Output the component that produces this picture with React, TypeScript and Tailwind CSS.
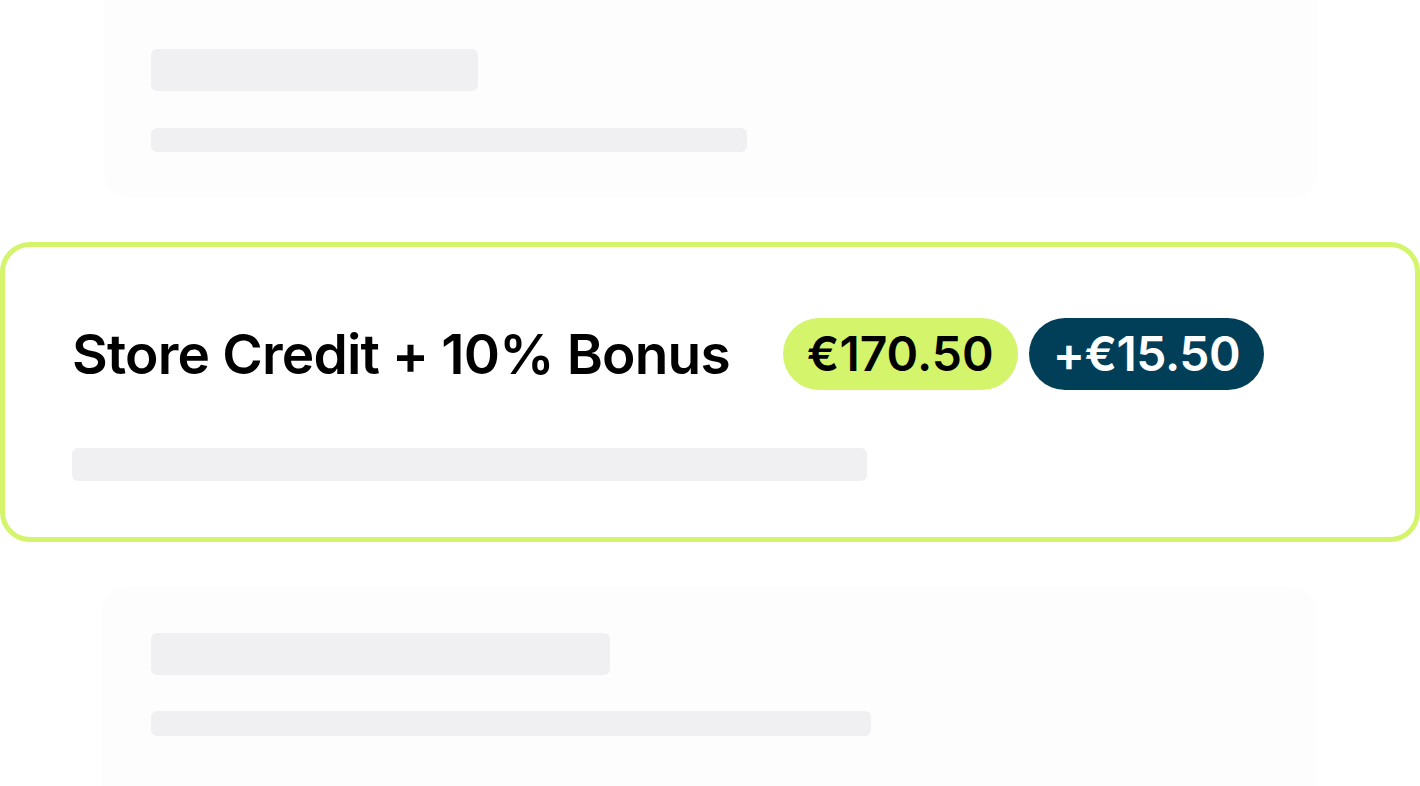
export default function App() {
  return (
    <div
      className="w-[1420px] h-[786px] overflow-hidden bg-white flex flex-col"
      style={{ fontFamily: "Inter, 'Noto Sans', sans-serif" }}
    >
      {/* faded card above */}
      <div className="ml-[104px] w-[1214px] h-[197px] shrink-0 rounded-b-3xl bg-[#fdfdfd] pl-[47px] pt-[49px] flex flex-col">
        <div className="w-[327px] h-[42px] rounded-md bg-[#f0eff1]" />
        <div className="mt-[37px] w-[596px] h-[24px] rounded-md bg-[#f0eff1]" />
      </div>

      {/* highlighted card */}
      <div className="mt-[45px] w-[1420px] h-[300px] shrink-0 rounded-[30px] border-[5px] border-[#d3f46b] bg-white pl-[67px] pt-[71px] flex flex-col">
        <div className="flex items-center h-[72px]">
          <span className="text-[55px] font-semibold text-black tracking-[-0.015em] leading-none">
            Store Credit + 10% Bonus
          </span>
          <span className="ml-[53px] h-[72px] px-[24px] rounded-full bg-[#d3f46b] flex items-center text-[48px] font-semibold text-black leading-none">
            €170.50
          </span>
          <span className="ml-[11px] h-[72px] px-[24px] rounded-full bg-[#013f58] flex items-center text-[48px] font-semibold text-white tracking-[-0.01em] leading-none">
            +€15.50
          </span>
        </div>
        <div className="mt-[58px] w-[795px] h-[33px] rounded-md bg-[#f0eff1]" />
      </div>

      {/* faded card below */}
      <div className="mt-[45px] ml-[102px] w-[1214px] h-[220px] shrink-0 rounded-3xl bg-[#fdfdfd] pl-[49px] pt-[46px] flex flex-col">
        <div className="w-[459px] h-[42px] rounded-md bg-[#f0eff1]" />
        <div className="mt-[36px] w-[720px] h-[25px] rounded-md bg-[#f0eff1]" />
      </div>
    </div>
  );
}
